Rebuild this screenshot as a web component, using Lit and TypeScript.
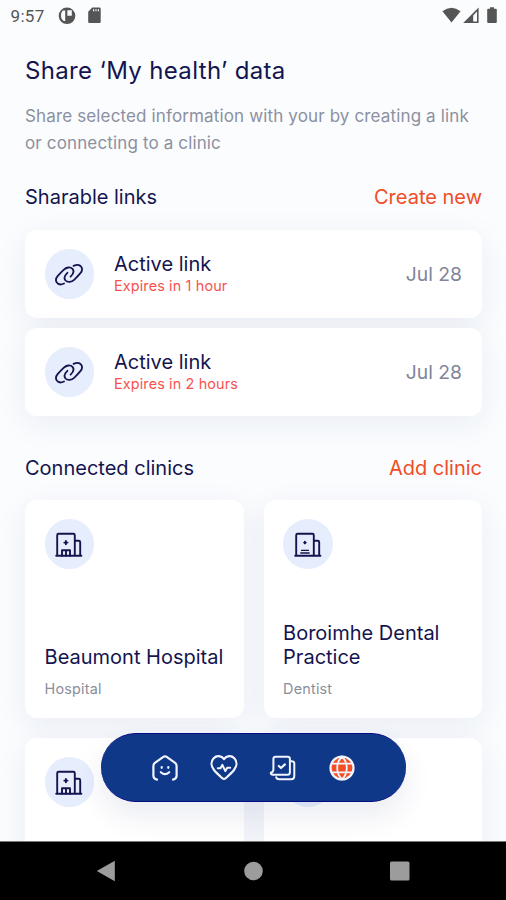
import { LitElement, html, svg, css } from "lit";
import { customElement, property } from "lit/decorators.js";

const hospital = svg`<svg class="glyph" viewBox="0 0 28 28" fill="none" stroke="currentColor" stroke-width="1.9" stroke-linecap="round" stroke-linejoin="round">
  <path d="M1.2 25.7H26.4M2.2 25.7V5.2Q2.2 3.8 3.6 3.8H18.4Q19.8 3.8 19.8 5.2V25.7M19.8 10.8H23.7Q25.2 10.8 25.2 12.3V25.7"/>
  <path d="M7 25.7V20.2H15V25.7M11 20.2V25.7"/><path d="M10.9 11V14.2M9.3 12.6H12.5"/></svg>`;

const dentist = svg`<svg class="glyph" viewBox="0 0 28 28" fill="none" stroke="currentColor" stroke-width="1.9" stroke-linecap="round" stroke-linejoin="round">
  <path d="M1.2 25.7H26.4M2.2 25.7V5.2Q2.2 3.8 3.6 3.8H18.4Q19.8 3.8 19.8 5.2V25.7M19.8 10.8H23.7Q25.2 10.8 25.2 12.3V25.7"/>
  <path d="M7.6 20.4H14.4M6.8 23H15.2" stroke-width="1.4"/><path d="M10.9 11.8V13.4M10.1 12.6H11.7"/></svg>`;

const link = svg`<svg class="glyph" viewBox="-14 -14 28 28" fill="none" stroke="currentColor" stroke-width="1.8" stroke-linecap="round">
  <path d="M-5 9.5C-7.8 10.8-10.8 10.6-12.2 8.6C-13.4 6.8-13.1 4.2-11.4 2.2C-9.4-.2-7.8-2-5.4-4.2C-2.6-6.8 1.4-7.4 3.5-5.1C5.2-3 4.6-.2 1.6 2.6"/>
  <path d="M4.6-8.1C7.6-9.5 10.8-9.2 12.2-7.2C13.4-5.4 13.1-2.8 11.4-.8C9.4 1.6 7.8 3.400 5.400 5.600C2.600 8.200-1.400 8.800-3.500 6.500C-5.200 4.400-4.600 1.600-1.600-1.200"/></svg>`;

const glyphs: Record<string, unknown> = { hospital, dentist, link };

@customElement("round-icon")
class RoundIcon extends LitElement {
  @property() name = "link";
  static styles = css`
    :host { display: flex; flex: none; width: 49.5px; height: 49.5px; border-radius: 50%;
      background: #e6edfd; color: #14144f; align-items: center; justify-content: center; }
    .glyph { width: 28px; height: 28px; display: block; }
  `;
  render() { return html`${glyphs[this.name]}`; }
}

@customElement("link-card")
class LinkCard extends LitElement {
  @property() expires = "";
  static styles = css`
    :host { display: flex; align-items: center; box-sizing: border-box; height: 88px; padding: 0 20px 0 19.6px;
      border-radius: 12px; background: #fff; box-shadow: 0 8px 32px rgba(35, 45, 110, .07); }
    .body { flex: 1; margin-left: 19.9px; }
    .name { font-size: 20px; line-height: 24px; color: #14144f; }
    .expires { font-size: 14.4px; line-height: 20px; letter-spacing: .14px; color: #f8524f; }
    .date { font-size: 19.3px; color: #81859a; }
  `;
  render() {
    return html`<round-icon name="link"></round-icon>
      <div class="body"><div class="name">Active link</div><div class="expires">${this.expires}</div></div>
      <div class="date">Jul 28</div>`;
  }
}

@customElement("clinic-card")
class ClinicCard extends LitElement {
  @property() name = "";
  @property() kind = "";
  @property() icon = "hospital";
  static styles = css`
    :host { display: flex; flex-direction: column; box-sizing: border-box; height: 218px; padding: 19px 19px 19px 19.6px;
      border-radius: 12px; background: #fff; box-shadow: 0 8px 32px rgba(35, 45, 110, .07); }
    .name { margin-top: auto; font-size: 20px; line-height: 24px; color: #14144f; white-space: pre; }
    .kind { margin-top: 10px; font-size: 14.4px; line-height: 20px; letter-spacing: .2px; color: #8b8e9b; }
  `;
  render() {
    return html`<round-icon name=${this.icon}></round-icon>
      <div class="name">${this.name}</div><div class="kind">${this.kind}</div>`;
  }
}

@customElement("app-root")
class AppRoot extends LitElement {
  static styles = css`
    :host { display: flex; flex-direction: column; position: relative; width: 506px; height: 900px; overflow: hidden;
      background: #fafcfe; font-family: Inter, "Liberation Sans", sans-serif; }
    .status { flex: none; display: flex; align-items: center; height: 31px; padding: 0 9px 0 10.5px; color: #555; }
    .time { font: 17px/32px Roboto, sans-serif; letter-spacing: .35px; width: 46px; }
    .status svg { display: block; fill: currentColor; }
    .sd { margin-left: 11px; }
    .wifi { margin-left: auto; }
    .signal { margin-left: 2px; }
    .battery { margin-left: 8px; }
    .content { flex: 1; min-height: 0; overflow: hidden; padding: 0 24px 0 25px; }
    h1 { margin: 24px 0 0; font-size: 24px; line-height: 32px; font-weight: 400; letter-spacing: .35px; color: #14144f; }
    .intro { margin: 16px 0 0; font-size: 17px; line-height: 27px; letter-spacing: .14px; color: #8c90a0; white-space: pre; }
    .heading { display: flex; justify-content: space-between; font-size: 20px; line-height: 26px; color: #14144f; }
    .links-heading { margin-top: 27px; }
    .clinics-heading { margin-top: 39px; }
    .action { color: #f04c27; }
    .links { display: flex; flex-direction: column; gap: 10px; margin-top: 20px; }
    .clinics { display: grid; grid-template-columns: 1fr 1fr; gap: 20px; margin-top: 19px; }
    .tabs { position: absolute; left: 101px; top: 733px; box-sizing: border-box; width: 305px; height: 69px; padding: 0 50px;
      display: flex; align-items: center; justify-content: space-between; border-radius: 35px; background: #0f3889;
      border: solid #080a80; border-width: 1px 0; box-shadow: 0 14px 30px rgba(35, 45, 110, .09); }
    .tabs svg { width: 28px; height: 28px; display: block; fill: none; stroke: #f2f4ff; stroke-width: 2.2; stroke-linecap: round; stroke-linejoin: round; }
    .system { flex: none; display: flex; align-items: center; justify-content: space-between; box-sizing: border-box;
      height: 59px; padding: 0 96px; background: #000; border-top: 1px solid #77787a; }
    .system svg { display: block; fill: #9c9c9c; }
  `;

  render() {
    return html`
      <div class="status">
        <span class="time">9:57</span>
        <svg width="20" height="20" viewBox="0 0 20 20"><path fill-rule="evenodd" d="M10 1.5a8.3 8.3 0 1 0 0 16.6 8.3 8.3 0 0 0 0-16.6ZM5.8 4.4H8.2V14.9H6.8Q4 13.2 4 9.4Q4 6.3 5.8 4.4ZM10.4 4.2H14.8V9.8H10.4Z"/></svg>
        <svg class="sd" width="13" height="17" viewBox="0 0 13 17"><path fill-rule="evenodd" d="M4.3.5H11.5Q12.7.5 12.7 1.7V14.8Q12.7 16 11.5 16H1.4Q.2 16 .2 14.8V4.8ZM5 2.2V4.2H6.2V2.2ZM7.4 2.2V4.2H8.6V2.2ZM9.8 2.2V4.2H11V2.2Z"/></svg>
        <svg class="wifi" width="19" height="17" viewBox="0 0 19 17"><path d="M.4 4.2Q9.5-2.8 18.6 4.2L9.5 15.6Z"/></svg>
        <svg class="signal" width="16" height="17" viewBox="0 0 16 17"><path fill-rule="evenodd" d="M15.6.5V16H.2ZM14 4.6L10.2 8.5V14.6H14Z"/></svg>
        <svg class="battery" width="10" height="17" viewBox="0 0 10 17"><path d="M3 .3H7V1.8H8.8Q9.8 1.8 9.8 2.8V15Q9.8 16 8.8 16H1.2Q.2 16 .2 15V2.8Q.2 1.8 1.2 1.8H3Z"/></svg>
      </div>
      <div class="content">
        <h1>Share ‘My health’ data</h1>
        <p class="intro">${"Share selected information with your by creating a link\nor connecting to a clinic"}</p>
        <div class="heading links-heading"><span>Sharable links</span><span class="action">Create new</span></div>
        <div class="links">
          <link-card expires="Expires in 1 hour"></link-card>
          <link-card expires="Expires in 2 hours"></link-card>
        </div>
        <div class="heading clinics-heading"><span>Connected clinics</span><span class="action">Add clinic</span></div>
        <div class="clinics">
          <clinic-card name="Beaumont Hospital" kind="Hospital"></clinic-card>
          <clinic-card name=${"Boroimhe Dental\nPractice"} kind="Dentist" icon="dentist"></clinic-card>
          <clinic-card></clinic-card>
          <clinic-card></clinic-card>
        </div>
      </div>
      <nav class="tabs">
        <svg viewBox="0 0 28 28"><path d="M6 25.6Q2.4 25 2.4 21.8V11.8Q2.4 10 3.9 8.9L12.3 2.9Q14 1.8 15.7 2.9L24.1 8.9Q25.6 10 25.6 11.8V21.8Q25.6 25 22 25.6"/><path d="M10.7 13V13.8M17.3 13V13.8M9.8 18.2Q14 22.2 18.2 18.2"/></svg>
        <svg viewBox="0 0 28 28"><path d="M14 5C11.5 1.5 6.5 1.3 3.7 4.3C.6 7.6 1 12.4 4 16C6.5 19 9.5 21.7 12.3 24.2Q14 25.7 15.7 24.2C18.5 21.7 21.5 19 24 16C27 12.4 27.4 7.6 24.3 4.3C21.5 1.3 16.5 1.5 14 5Z"/><path stroke-width="2" d="M7.8 14.2H10.5L12.4 10.8L15.3 17.2L17.2 13.8H20.2"/></svg>
        <svg viewBox="0 0 28 28"><path stroke-width="2" d="M4.4 5Q4.4 2.8 6.6 2.8H18.7Q20.9 2.8 20.9 5V18.2Q20.9 20.7 18.5 20.7H4Q1.800 20.7 1.800 18.8Q4.400 18.2 4.400 15.5Z"/><path stroke-width="2" d="M21.100 7.200H22.300Q25.300 7.200 25.300 9.500V22Q25.300 25.200 22.300 25.200H10Q7.500 25.200 7.200 23.200"/><path d="M9.800 12L12 14L15.900 10.400"/></svg>
        <svg viewBox="0 0 28 28"><circle cx="14" cy="14" r="11.500" fill="#f05023"/><path stroke-width="1.800" d="M4 9.600H24M4 18.400H24M14 2.500C7.600 9 7.600 19 14 25.500M14 2.500C20.400 9 20.400 19 14 25.500"/></svg>
      </nav>
      <div class="system">
        <svg width="20" height="22" viewBox="0 0 20 22"><path d="M.8 11L18.800 .8V21.200Z"/></svg>
        <svg width="20" height="20" viewBox="0 0 20 20"><circle cx="10.500" cy="10" r="9.300"/></svg>
        <svg width="21" height="20" viewBox="0 0 21 20"><rect x="1" y=".5" width="19.500" height="19" rx="1.500"/></svg>
      </div>`;
  }
}
